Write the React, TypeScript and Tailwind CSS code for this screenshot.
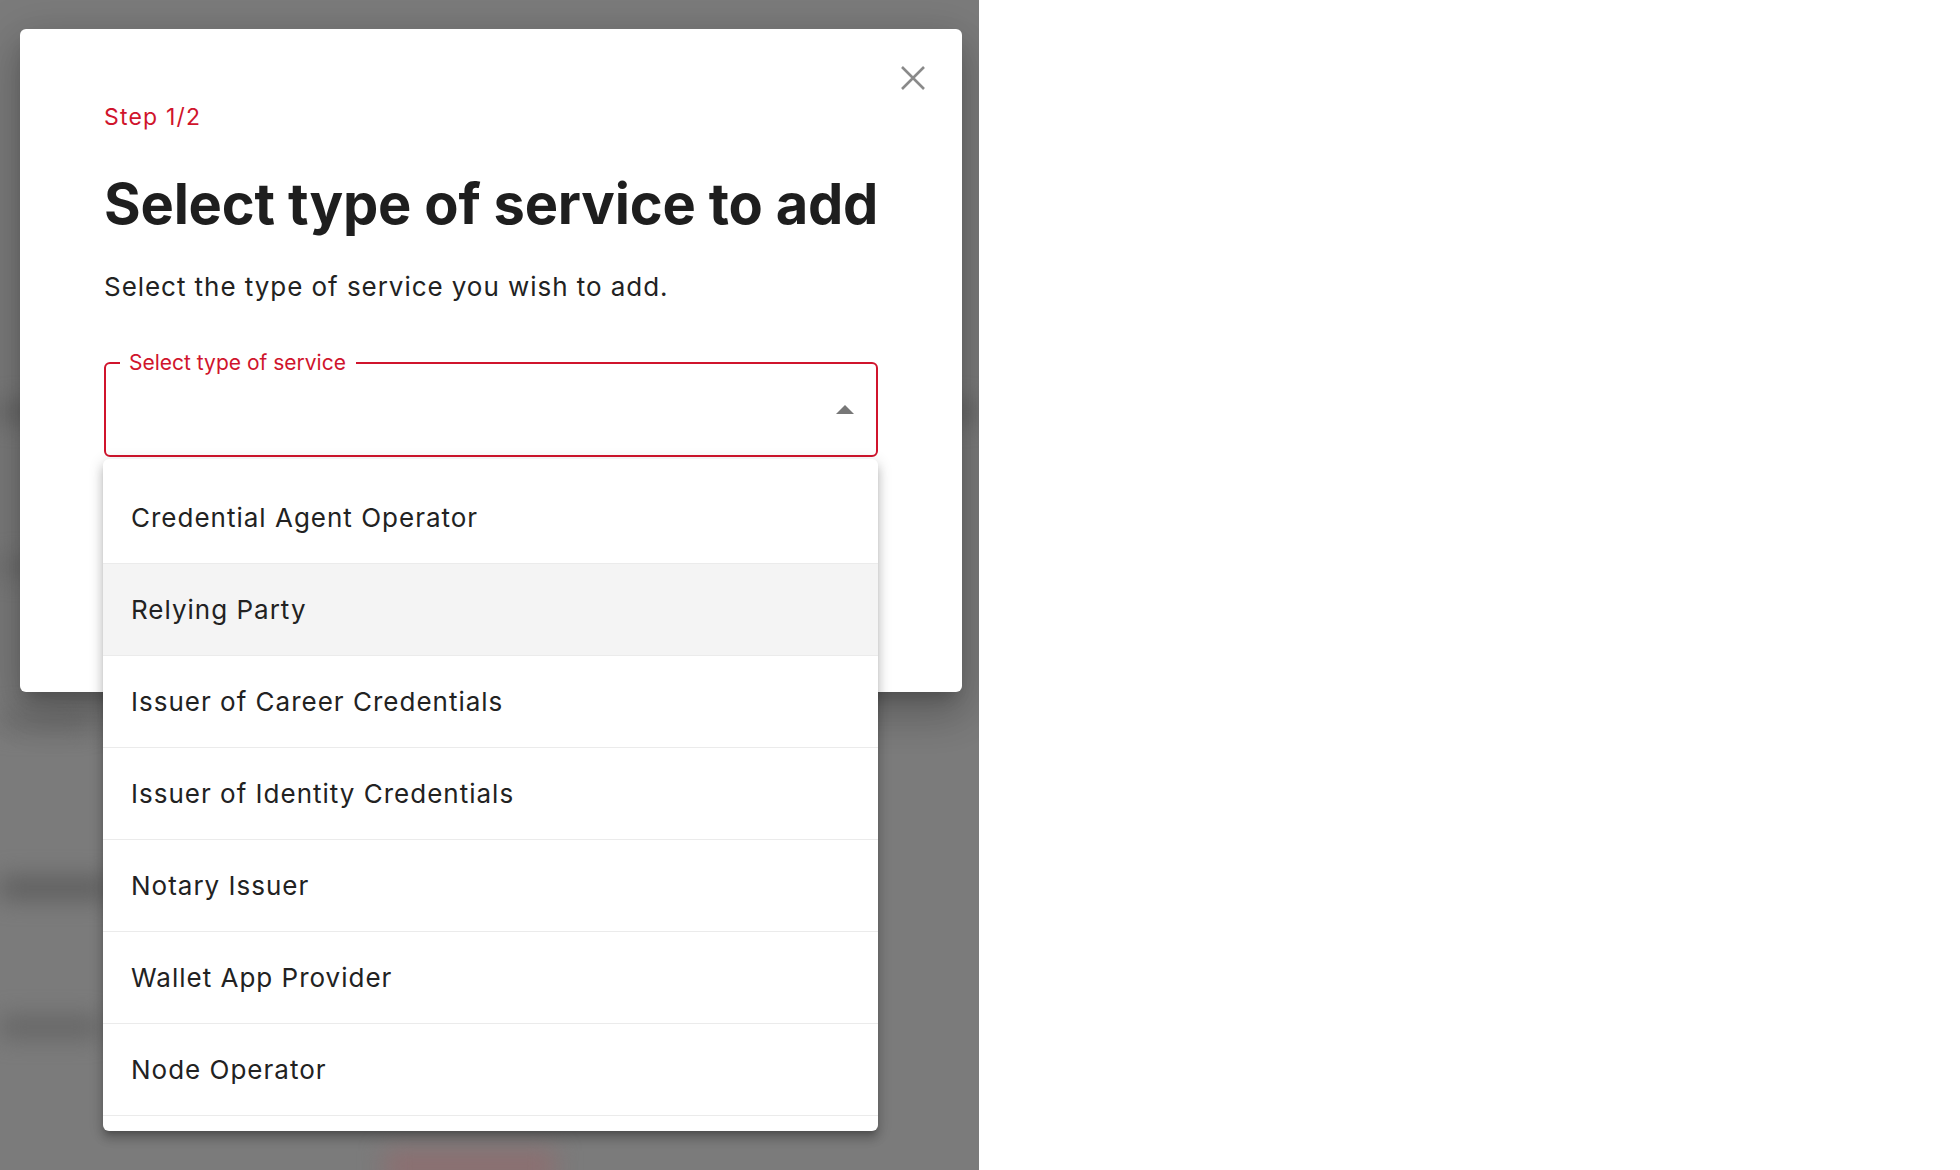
import React from "react";

const items = [
  "Credential Agent Operator",
  "Relying Party",
  "Issuer of Career Credentials",
  "Issuer of Identity Credentials",
  "Notary Issuer",
  "Wallet App Provider",
  "Node Operator",
  "",
];

export default function App() {
  return (
    <div
      className="w-[1960px] h-[1170px] flex bg-white overflow-hidden"
      style={{ fontFamily: "Inter, 'Noto Sans', sans-serif" }}
    >
      <div className="relative w-[979px] h-full bg-[#7b7b7b] overflow-hidden">
        {/* blurred page behind the backdrop */}
        <div className="flex flex-col">
          <div className="h-[404px]" />
          <div className="h-[16px] w-full bg-[#5e5e5e] blur-md" />
          <div className="h-[140px]" />
          <div className="h-[14px] w-[70px] bg-[#666] blur-md" />
          <div className="h-[140px]" />
          <div className="h-[14px] w-[90px] bg-[#6a6a6a] blur-md" />
          <div className="h-[150px]" />
          <div className="h-[20px] w-[110px] bg-[#5a5a5a] blur-md" />
          <div className="h-[120px]" />
          <div className="h-[18px] w-[100px] bg-[#606060] blur-md" />
          <div className="h-[115px]" />
          <div className="ml-[385px] h-[30px] w-[170px] bg-[#8e6e70] blur-md" />
        </div>

        {/* modal */}
        <div className="absolute left-[20px] top-[29px] w-[942px] h-[663px] bg-white rounded-[6px] shadow-[0_11px_15px_-7px_rgba(0,0,0,0.2),0_24px_38px_3px_rgba(0,0,0,0.14),0_9px_46px_8px_rgba(0,0,0,0.12)]">
          <button className="absolute top-[37px] right-[37px] w-[24px] h-[24px]">
            <svg width="24" height="24" viewBox="0 0 24 24">
              <path
                d="M1 1 L23 23 M23 1 L1 23"
                stroke="#8a8a8a"
                strokeWidth="2.6"
                strokeLinecap="butt"
              />
            </svg>
          </button>
          <div className="flex flex-col pt-[75px] px-[84px]">
            <div className="text-[23px] leading-[27px] tracking-[1.2px] text-[#d0142c]">Step 1/2</div>
            <h1 className="mt-[39px] whitespace-nowrap text-[56px] leading-[68px] font-bold text-[#1e1e1e] tracking-[-0.2px]">
              Select type of service to add
            </h1>
            <p className="mt-[33px] text-[26px] leading-[32px] tracking-[0.95px] text-[#222]">
              Select the type of service you wish to add.
            </p>
            <div className="relative mt-[59px] w-[774px] h-[95px] border-2 border-[#d0142c] rounded-[6px] flex items-center justify-end pr-[22px]">
              <span className="absolute left-[14px] top-[-15px] bg-white pl-[9px] pr-[10px] text-[21px] leading-[28px] text-[#d0142c]">
                Select type of service
              </span>
              <svg width="18" height="9" viewBox="0 0 18 9">
                <path d="M0 9 L9 0 L18 9 Z" fill="#777" />
              </svg>
            </div>
          </div>
        </div>

        {/* dropdown menu */}
        <div className="absolute left-[103px] top-[459px] w-[775px] h-[672px] bg-white rounded-[6px] overflow-hidden shadow-[0_5px_5px_-3px_rgba(0,0,0,0.2),0_8px_10px_1px_rgba(0,0,0,0.14),0_3px_14px_2px_rgba(0,0,0,0.12)]">
          <ul className="flex flex-col pt-[13px]">
            {items.map((it, i) => (
              <li
                key={i}
                className={
                  i === 1
                    ? "h-[92px] shrink-0 flex items-center pl-[28px] border-b border-[#ebebeb] bg-[#f4f4f4] text-[26px] tracking-[1px] text-[#222]"
                    : "h-[92px] shrink-0 flex items-center pl-[28px] border-b border-[#ebebeb] text-[26px] tracking-[1px] text-[#222]"
                }
              >
                {it}
              </li>
            ))}
          </ul>
        </div>
      </div>
      <div className="flex-1 h-full bg-white" />
    </div>
  );
}
